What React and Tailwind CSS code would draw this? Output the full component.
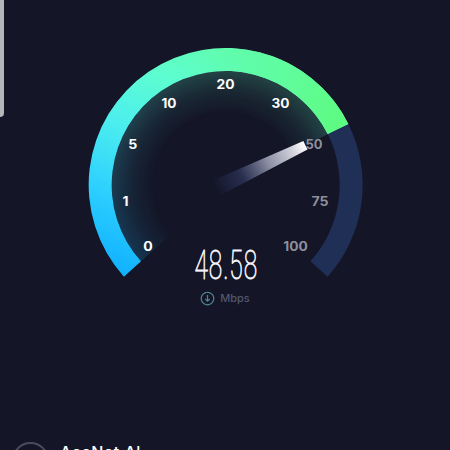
import { CgArrowDownO } from "react-icons/cg";

const LABELS = [
  { text: "0", x: 148, y: 251, width: 9.5, active: true },
  { text: "1", x: 125.5, y: 206, width: 6, active: true },
  { text: "5", x: 132.8, y: 148.5, width: 9, active: true },
  { text: "10", x: 169, y: 107.7, width: 15, active: true },
  { text: "20", x: 225.5, y: 88.5, width: 18, active: true },
  { text: "30", x: 280.5, y: 107.7, width: 18, active: true },
  { text: "50", x: 314, y: 148.5, width: 17, active: false },
  { text: "75", x: 320, y: 206, width: 17, active: false },
  { text: "100", x: 295.5, y: 251, width: 24.5, active: false },
];

function Gauge() {
  return (
    <svg viewBox="0 0 450 290" className="block w-full h-[290px]">
      <defs>
        <linearGradient id="speed" gradientUnits="userSpaceOnUse" x1="130" y1="275" x2="225" y2="48">
          <stop offset="0" stopColor="#12b2ff" />
          <stop offset="0.25" stopColor="#2bcdff" />
          <stop offset="0.55" stopColor="#4ceeee" />
          <stop offset="0.8" stopColor="#5dfdd0" />
          <stop offset="1" stopColor="#60fcb0" />
        </linearGradient>
        <linearGradient id="speedEnd" gradientUnits="userSpaceOnUse" x1="195" y1="60" x2="345" y2="125">
          <stop offset="0" stopColor="#60fca8" stopOpacity="0" />
          <stop offset="0.5" stopColor="#60fca0" />
          <stop offset="1" stopColor="#5dfb80" />
        </linearGradient>
        <radialGradient id="fade" gradientUnits="userSpaceOnUse" cx="225.7" cy="185" r="114">
          <stop offset="0.62" stopColor="#fff" stopOpacity="0" />
          <stop offset="0.82" stopColor="#fff" stopOpacity="0.08" />
          <stop offset="1" stopColor="#fff" stopOpacity="0.2" />
        </radialGradient>
        <mask id="glow">
          <circle cx="225.7" cy="185" r="114" fill="url(#fade)" />
        </mask>
        <linearGradient id="needle" gradientUnits="userSpaceOnUse" x1="214" y1="190" x2="305" y2="145">
          <stop offset="0" stopColor="#28315a" stopOpacity="0" />
          <stop offset="0.3" stopColor="#2d365a" stopOpacity="0.75" />
          <stop offset="0.6" stopColor="#8d90a6" />
          <stop offset="0.85" stopColor="#cfced8" />
          <stop offset="1" stopColor="#ffffff" />
        </linearGradient>
      </defs>

      {/* inner glow under the filled part */}
      <g mask="url(#glow)">
        <path d="M225.7 185 L123.9 276.7 A137 137 0 1 1 348.3 123.9 Z" fill="url(#speed)" />
      </g>

      {/* track */}
      <path
        d="M348.3 123.9 A137 137 0 0 1 327.5 276.7 L310.4 261.3 A114 114 0 0 0 327.7 134.1 Z"
        fill="#202f56"
      />
      {/* filled part */}
      <path
        d="M123.9 276.7 A137 137 0 1 1 348.3 123.9 L327.7 134.1 A114 114 0 1 0 141 261.3 Z"
        fill="url(#speed)"
      />
      <path
        d="M190 52.7 A137 137 0 0 1 348.3 123.9 L327.7 134.1 A114 114 0 0 0 190 76.7 Z"
        fill="url(#speedEnd)"
      />

      {LABELS.map((l) => (
        <text
          key={l.text}
          x={l.x}
          y={l.y}
          textAnchor="middle"
          textLength={l.width}
          lengthAdjust="spacingAndGlyphs"
          className={`font-['Inter'] font-bold text-[13px] ${l.active ? "fill-white" : "fill-[#8e8f9d]"}`}
        >
          {l.text}
        </text>
      ))}

      <path d="M214 180 L303.3 141 L307.5 149.5 L221 195 Z" fill="url(#needle)" />

      <text
        x="194.5"
        y="279"
        textLength="63.5"
        lengthAdjust="spacingAndGlyphs"
        className="font-['Roboto'] font-thin text-[40px] tracking-[1.5px] fill-[#f4f4fa] stroke-[#f4f4fa] [stroke-width:0.9]"
      >
        48.58
      </text>
    </svg>
  );
}

function App() {
  return (
    <div className="relative flex flex-col w-[450px] h-[450px] overflow-hidden bg-[#141526]">
      <div className="absolute left-0 top-0 w-1 h-[117px] rounded-br bg-[#b5b6b8]"></div>

      <Gauge />

      <div className="flex items-center justify-center gap-[5px] h-4">
        <CgArrowDownO className="w-[15px] h-[15px] text-[#4d8493]" />
        <span className="font-['Inter'] font-medium text-[11px] leading-4 text-[#53566d]">Mbps</span>
      </div>

      <div className="flex items-start mt-auto h-[9px] pl-3 gap-[11px]">
        <div className="shrink-0 w-[37px] h-[37px] mt-px rounded-full border-2 border-[#4a4c5d]"></div>
        <span className="shrink-0 mt-px font-['Inter'] font-medium text-[16px] tracking-[0.5px] leading-5 text-white">
          AccNet Al
        </span>
      </div>
    </div>
  );
}

export default App;
